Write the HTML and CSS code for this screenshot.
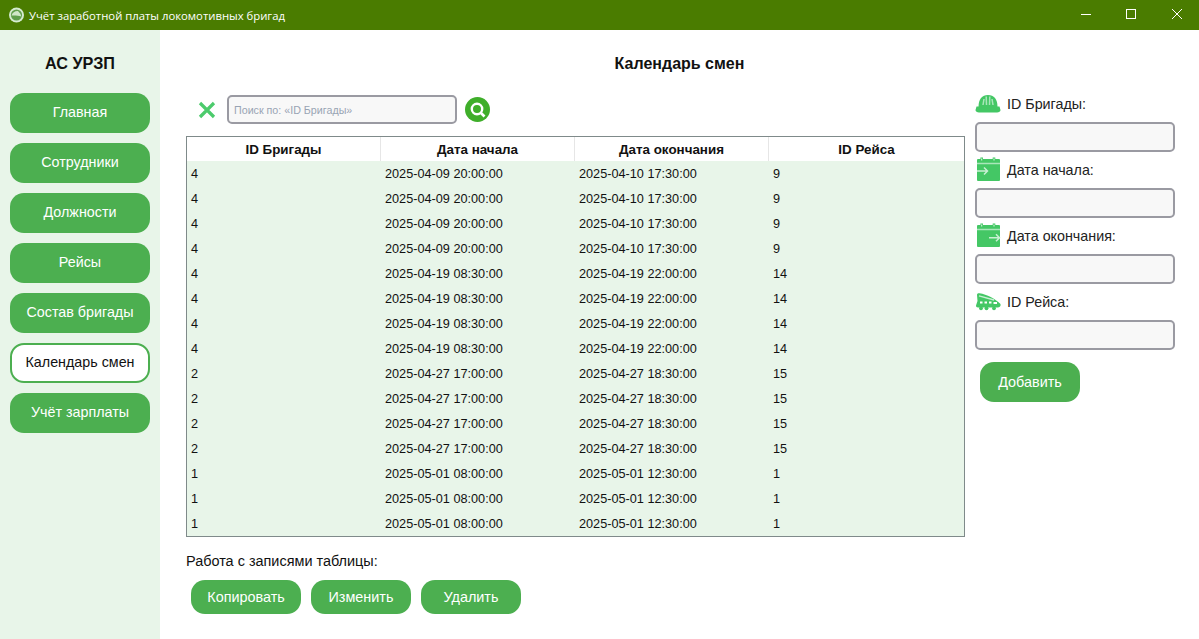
FILE: index.html
```html
<!DOCTYPE html>
<html lang="ru">
<head>
  <meta charset="UTF-8">
  <title>Учёт заработной платы локомотивных бригад</title>
  <link rel="stylesheet" href="styles.css">
</head>
<body>
  <header class="titlebar">
    <svg class="app-logo" width="18" height="18" viewBox="0 0 18 18">
      <circle cx="9.500" cy="9" r="7.500" fill="#d5ebd0"/>
      <circle cx="9.500" cy="9" r="5.600" fill="#5f9f4c"/>
      <path d="M4.500 9.500 C5.500 6.500 8 4.800 11 5 L13.500 8 L14.300 10.500 C11 9.300 7.500 9.300 4.500 9.500 Z" fill="#cfe7c8"/>
    </svg>
    <span class="app-title">Учёт заработной платы локомотивных бригад</span>
    <div class="win-buttons">
      <svg class="win-btn" width="46" height="30" viewBox="0 0 46 30"><path d="M20 14.500 H30" stroke="#fff" fill="none"/></svg>
      <svg class="win-btn" width="46" height="30" viewBox="0 0 46 30"><rect x="19.500" y="9.500" width="9" height="9" stroke="#fff" fill="none"/></svg>
      <svg class="win-btn" width="46" height="30" viewBox="0 0 46 30"><path d="M19 9 L29 19 M29 9 L19 19" stroke="#fff" fill="none"/></svg>
    </div>
  </header>

  <div class="app">
    <nav class="sidebar">
      <div class="brand">АС УРЗП</div>
      <a class="nav-btn">Главная</a>
      <a class="nav-btn">Сотрудники</a>
      <a class="nav-btn">Должности</a>
      <a class="nav-btn">Рейсы</a>
      <a class="nav-btn">Состав бригады</a>
      <a class="nav-btn active">Календарь смен</a>
      <a class="nav-btn">Учёт зарплаты</a>
    </nav>

    <main class="content">
      <h1 class="page-title">Календарь смен</h1>
      <div class="columns">
        <section class="center">
          <div class="search-row">
            <svg class="clear-icon" width="20" height="20" viewBox="0 0 20 20"><path d="M3 3 L17 17 M17 3 L3 17" stroke="#4ccb6c" stroke-width="3.200" fill="none"/></svg>
            <input class="search-input" type="text" placeholder="Поиск по: «ID Бригады»">
            <button class="search-btn">
              <svg width="18" height="18" viewBox="0 0 18 18"><circle cx="8" cy="8" r="5.200" stroke="#fff" stroke-width="2.400" fill="none"/><path d="M12 12 L15.500 15.500" stroke="#fff" stroke-width="2.600" fill="none"/></svg>
            </button>
          </div>

          <table class="grid">
            <thead>
              <tr><th>ID Бригады</th><th>Дата начала</th><th>Дата окончания</th><th>ID Рейса</th></tr>
            </thead>
            <tbody>
              <tr><td>4</td><td>2025-04-09 20:00:00</td><td>2025-04-10 17:30:00</td><td>9</td></tr>
              <tr><td>4</td><td>2025-04-09 20:00:00</td><td>2025-04-10 17:30:00</td><td>9</td></tr>
              <tr><td>4</td><td>2025-04-09 20:00:00</td><td>2025-04-10 17:30:00</td><td>9</td></tr>
              <tr><td>4</td><td>2025-04-09 20:00:00</td><td>2025-04-10 17:30:00</td><td>9</td></tr>
              <tr><td>4</td><td>2025-04-19 08:30:00</td><td>2025-04-19 22:00:00</td><td>14</td></tr>
              <tr><td>4</td><td>2025-04-19 08:30:00</td><td>2025-04-19 22:00:00</td><td>14</td></tr>
              <tr><td>4</td><td>2025-04-19 08:30:00</td><td>2025-04-19 22:00:00</td><td>14</td></tr>
              <tr><td>4</td><td>2025-04-19 08:30:00</td><td>2025-04-19 22:00:00</td><td>14</td></tr>
              <tr><td>2</td><td>2025-04-27 17:00:00</td><td>2025-04-27 18:30:00</td><td>15</td></tr>
              <tr><td>2</td><td>2025-04-27 17:00:00</td><td>2025-04-27 18:30:00</td><td>15</td></tr>
              <tr><td>2</td><td>2025-04-27 17:00:00</td><td>2025-04-27 18:30:00</td><td>15</td></tr>
              <tr><td>2</td><td>2025-04-27 17:00:00</td><td>2025-04-27 18:30:00</td><td>15</td></tr>
              <tr><td>1</td><td>2025-05-01 08:00:00</td><td>2025-05-01 12:30:00</td><td>1</td></tr>
              <tr><td>1</td><td>2025-05-01 08:00:00</td><td>2025-05-01 12:30:00</td><td>1</td></tr>
              <tr><td>1</td><td>2025-05-01 08:00:00</td><td>2025-05-01 12:30:00</td><td>1</td></tr>
            </tbody>
          </table>

          <div class="records-label">Работа с записями таблицы:</div>
          <div class="records-actions">
            <button class="pill wide">Копировать</button>
            <button class="pill">Изменить</button>
            <button class="pill">Удалить</button>
          </div>
        </section>

        <aside class="form">
          <label class="field-label">
            <svg width="26" height="20" viewBox="0 0 26 20">
              <path d="M3.500 13 C3.500 5 7 1 13 1 C19 1 22.500 5 22.500 13 Z" fill="#44c765"/>
              <path d="M1.500 12.500 H24.500 L25.500 16 C25.500 17.500 24 18.500 22 18.500 H4 C2 18.500 0.500 17.500 0.500 16 Z" fill="#44c765"/>
              <path d="M8 11 L9 5 M11.500 11 L11.200 2.500 M14.500 11 L14.800 2.500 M18 11 L17 5" stroke="#a9e6ba" stroke-width="1.500" fill="none"/>
            </svg>
            ID Бригады:
          </label>
          <input class="field-input" type="text">

          <label class="field-label">
            <svg width="26" height="26" viewBox="0 0 26 26">
              <rect x="2" y="2" width="23" height="22" rx="1" fill="#44c765"/>
              <path d="M2 6.500 H25" stroke="#a9e6ba" stroke-width="1.500" fill="none"/>
              <path d="M6.700 0.500 V4 M19 0.500 V4" stroke="#44c765" stroke-width="2.600" fill="none"/>
              <path d="M6.700 1.500 V3.500 M19 1.500 V3.500" stroke="#d9f5e0" stroke-width="1" fill="none"/>
              <path d="M2 14 H12 M9 10.500 L12.500 14 L9 17.500" stroke="#c9f0d4" stroke-width="1.500" fill="none"/>
            </svg>
            Дата начала:
          </label>
          <input class="field-input" type="text">

          <label class="field-label">
            <svg width="26" height="26" viewBox="0 0 26 26">
              <rect x="2" y="2" width="23" height="22" rx="1" fill="#44c765"/>
              <path d="M2 6.500 H25" stroke="#a9e6ba" stroke-width="1.500" fill="none"/>
              <path d="M6.700 0.500 V4 M19 0.500 V4" stroke="#44c765" stroke-width="2.600" fill="none"/>
              <path d="M6.700 1.500 V3.500 M19 1.500 V3.500" stroke="#d9f5e0" stroke-width="1" fill="none"/>
              <path d="M14 14.700 H24.500 M21 11.200 L24.500 14.700 L21 18.200" stroke="#c9f0d4" stroke-width="1.500" fill="none"/>
            </svg>
            Дата окончания:
          </label>
          <input class="field-input" type="text">

          <label class="field-label">
            <svg width="26" height="20" viewBox="0 0 26 20">
              <path d="M2 3 C2 1.500 3 1 4.500 1.300 C12 2.500 20 6.500 25.500 12 C26 14 24.800 15.500 22.500 15.500 H3 C1.500 15.500 1 14.500 1 13.500 L2.500 9 Z" fill="#44c765"/>
              <path d="M4 3.800 L19 8" stroke="#c9f0d4" stroke-width="1.300" fill="none"/>
              <path d="M5 10.500 H7.500 M9.500 10.500 H12 M14 10.500 H16.500 M18.500 11 H22" stroke="#fff" stroke-width="2" fill="none"/>
              <circle cx="6" cy="16.300" r="1.900" fill="#44c765"/>
              <circle cx="11.500" cy="16.300" r="1.900" fill="#44c765"/>
              <circle cx="19" cy="16.300" r="1.900" fill="#44c765"/>
            </svg>
            ID Рейса:
          </label>
          <input class="field-input" type="text">

          <button class="add-btn">Добавить</button>
        </aside>
      </div>
    </main>
  </div>
</body>
</html>
```

FILE: styles.css
```css
html, body {
  margin: 0;
  height: 639px;
  overflow: hidden;
  background-color: #fff;
  font-family: "Liberation Sans", Arial, sans-serif;
  color: #111;
}
.titlebar {
  height: 30px;
  background-color: #4a7c00;
  display: flex;
  align-items: center;
  padding-left: 7px;
}
.app-logo {
  margin-right: 4px;
}
.app-title {
  color: #fff;
  font-family: "Open Sans", sans-serif;
  font-size: 11.3px;
}
.win-buttons {
  margin-left: auto;
  display: flex;
}
.win-btn {
  display: block;
}
.app {
  display: flex;
  height: 609px;
}
.sidebar {
  width: 140px;
  padding: 0 10px;
  background-color: #e8f5e9;
  display: flex;
  flex-direction: column;
  gap: 10px;
}
.brand {
  height: 53px;
  padding-top: 24px;
  box-sizing: border-box;
  text-align: center;
  font-size: 16.2px;
  font-weight: bold;
}
.nav-btn {
  height: 40px;
  padding-bottom: 2px;
  box-sizing: border-box;
  border-radius: 14px;
  background-color: #4caf50;
  color: #fff;
  font-size: 14.3px;
  display: flex;
  align-items: center;
  justify-content: center;
}
.nav-btn.active {
  background-color: #fff;
  color: #111;
  border: 2px solid #4caf50;
}
.content {
  flex: 1;
  display: flex;
  flex-direction: column;
}
.page-title {
  margin: 0;
  height: 56px;
  padding-top: 25px;
  box-sizing: border-box;
  text-align: center;
  font-size: 16px;
}
.columns {
  display: flex;
  padding-left: 26px;
  gap: 10px;
}
.center {
  width: 779px;
  padding-top: 9px;
}
.search-row {
  display: flex;
  align-items: center;
  height: 29px;
  margin-bottom: 12px;
}
.clear-icon {
  margin: 0 10px 0 11px;
}
.search-input {
  width: 230px;
  height: 29px;
  box-sizing: border-box;
  border: 2px solid #9a9aa2;
  border-radius: 5px;
  background-color: #f8f8f8;
  padding: 0 5px;
  font-family: "Liberation Sans", Arial, sans-serif;
  font-size: 10.7px;
}
.search-input::placeholder {
  color: #98a4b4;
}
.search-btn {
  width: 25px;
  height: 25px;
  margin-left: 8px;
  padding: 0;
  border: none;
  border-radius: 50%;
  background-color: #3fae2a;
  display: flex;
  align-items: center;
  justify-content: center;
}
.grid {
  width: 779px;
  table-layout: fixed;
  border-collapse: separate;
  border-spacing: 0;
  border: 1px solid #7f8a8a;
  font-size: 12.7px;
}
.grid th {
  width: 193px;
  height: 23px;
  padding: 1px 0 0;
  background-color: #fff;
  border-right: 1px solid #e6e6e6;
  font-size: 13.4px;
  font-weight: bold;
}
.grid th:last-child {
  width: auto;
  border-right: none;
}
.grid td {
  height: 25px;
  padding: 0 0 0 4px;
  background-color: #e8f5e9;
}
.records-label {
  margin-top: 16px;
  font-size: 14.45px;
  line-height: 16px;
}
.records-actions {
  display: flex;
  gap: 10px;
  padding-left: 5px;
  margin-top: 11px;
}
.pill {
  width: 100px;
  height: 34px;
  padding: 0;
  border: none;
  border-radius: 14px;
  background-color: #4caf50;
  color: #fff;
  font-family: "Liberation Sans", Arial, sans-serif;
  font-size: 14.4px;
}
.pill.wide {
  width: 110px;
}
.form {
  width: 200px;
  display: flex;
  flex-direction: column;
}
.field-label {
  height: 36px;
  display: flex;
  align-items: center;
  gap: 6px;
  font-size: 14.3px;
  color: #222;
}
.field-input {
  width: 200px;
  height: 30px;
  box-sizing: border-box;
  border: 2px solid #9a9aa2;
  border-radius: 5px;
  background-color: #f8f8f8;
}
.add-btn {
  width: 100px;
  height: 40px;
  margin: 12px 0 0 5px;
  padding: 0;
  border: none;
  border-radius: 14px;
  background-color: #4caf50;
  color: #fff;
  font-family: "Liberation Sans", Arial, sans-serif;
  font-size: 14.4px;
}
```
